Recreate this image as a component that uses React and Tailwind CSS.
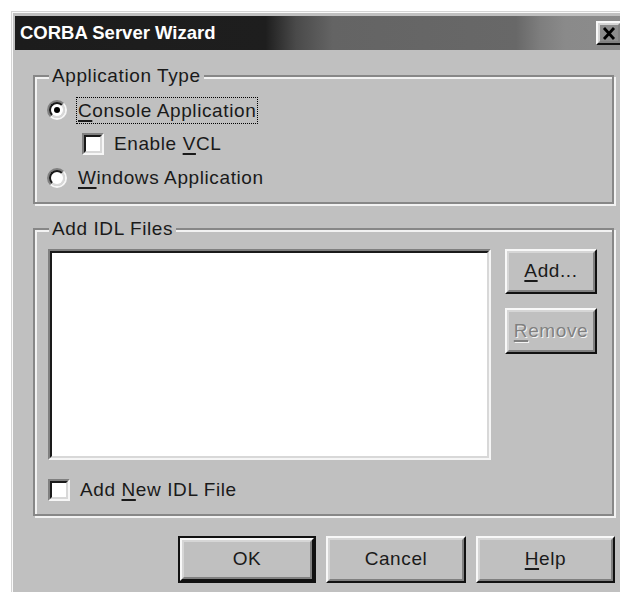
import React from "react";

const sans = "font-['Liberation_Sans',Arial,sans-serif]";

function Radio({ checked }) {
  return (
    <span className="flex h-[20px] w-[20px] shrink-0 rounded-full border-2 border-t-[#808080] border-l-[#808080] border-r-[#f6f6f6] border-b-[#f6f6f6]">
      <span className="flex flex-1 items-center justify-center rounded-full border-2 border-t-[#1a1a1a] border-l-[#1a1a1a] border-r-[#d8d8d8] border-b-[#d8d8d8] bg-white">
        {checked && <span className="h-[6px] w-[6px] rounded-full bg-black" />}
      </span>
    </span>
  );
}

function Check() {
  return (
    <span className="flex h-[22px] w-[22px] shrink-0 border-2 border-t-[#808080] border-l-[#808080] border-r-[#f6f6f6] border-b-[#f6f6f6]">
      <span className="flex-1 border-2 border-t-[#1a1a1a] border-l-[#1a1a1a] border-r-[#d8d8d8] border-b-[#d8d8d8] bg-white" />
    </span>
  );
}

function Face({ children }) {
  return (
    <span className="flex h-full w-full border-2 border-t-[#f8f8f8] border-l-[#f8f8f8] border-r-[#111] border-b-[#111]">
      <span className="flex h-full w-full items-center justify-center border-2 border-t-[#d6d6d6] border-l-[#d6d6d6] border-r-[#808080] border-b-[#808080]">
        {children}
      </span>
    </span>
  );
}

function Key({ children }) {
  return <span className="underline decoration-[1.5px] underline-offset-[3px]">{children}</span>;
}

function Group({ label, className, children }) {
  return (
    <div
      className={`relative border-2 border-[#878787] shadow-[2px_2px_0_#f2f2f2,inset_2px_2px_0_#f2f2f2] ${className}`}
    >
      <span className="absolute left-[14px] top-[-12px] bg-[#c0c0c0] px-[3px] leading-[22px]">{label}</span>
      {children}
    </div>
  );
}

export default function App() {
  return (
    <div className={`h-[592px] w-[620px] overflow-hidden bg-white pl-[11px] pt-[11px] text-[19px] tracking-[0.6px] text-[#1a1a1a] ${sans}`}>
      <div className="w-[640px] h-[600px] border-t border-l border-[#d4d4d4] bg-[#c0c0c0] pl-[3px] pt-[4px] shadow-[inset_1px_1px_0_#fafafa]">
        {/* caption bar */}
        <div className="flex h-[34px] w-[611px] items-center bg-[linear-gradient(90deg,#1c1c1c_0%,#1e1e1e_41%,#4a4a4a_46%,#646464_52%,#686868_82%,#7e7e7e_86%,#8a8a8a_90%,#8c8c8c_100%)] pl-[5px]">
          <span className="text-[18.5px] font-bold leading-none tracking-normal text-white">CORBA Server Wizard</span>
          <div className="ml-auto mr-[4px] h-[24px] w-[26px] self-center">
            <Face>
              <svg width="14" height="13" viewBox="0 0 14 13">
                <path d="M2 1 L12 12 M12 1 L2 12" stroke="#000" strokeWidth="2.8" fill="none" />
              </svg>
            </Face>
          </div>
        </div>

        <div className="ml-[18px] mt-[25px] w-[582px]">
          <Group label="Application Type" className="h-[129px] w-[581px] pl-[12px] pt-[16px]">
            <div className="flex h-[34px] items-center">
              <Radio checked />
              <span className="ml-[9px] border border-dotted border-black px-[1px] leading-[25px]">
                <Key>C</Key>onsole Application
              </span>
            </div>
            <div className="flex h-[34px] items-center pl-[35px]">
              <Check />
              <span className="ml-[10px]">
                Enable <Key>V</Key>CL
              </span>
            </div>
            <div className="flex h-[34px] items-center">
              <Radio />
              <span className="ml-[11px]">
                <Key>W</Key>indows Application
              </span>
            </div>
          </Group>

          <Group label="Add IDL Files" className="mt-[24px] h-[288px] w-[581px] pl-[13px] pt-[19px]">
            <div className="flex">
              <div className="h-[211px] w-[443px] border-2 border-t-[#808080] border-l-[#808080] border-r-[#f6f6f6] border-b-[#f6f6f6]">
                <div className="h-full w-full border-2 border-t-[#1a1a1a] border-l-[#1a1a1a] border-r-[#d8d8d8] border-b-[#d8d8d8] bg-white" />
              </div>
              <div className="ml-[14px] flex flex-col gap-[14px]">
                <div className="h-[45px] w-[92px]">
                  <Face>
                    <span>
                      <Key>A</Key>dd...
                    </span>
                  </Face>
                </div>
                <div className="h-[46px] w-[92px]">
                  <Face>
                    <span className="text-[#808080] [text-shadow:1px_1px_0_#f4f4f4]">
                      <Key>R</Key>emove
                    </span>
                  </Face>
                </div>
              </div>
            </div>
            <div className="mt-[16px] flex items-center">
              <Check />
              <span className="ml-[10px]">
                Add <Key>N</Key>ew IDL File
              </span>
            </div>
          </Group>

          <div className="mt-[20px] flex justify-end gap-[10px]">
            <div className="h-[47px] w-[138px] border-2 border-[#111]">
              <Face>OK</Face>
            </div>
            <div className="h-[47px] w-[140px]">
              <Face>Cancel</Face>
            </div>
            <div className="h-[47px] w-[139px]">
              <Face>
                <span>
                  <Key>H</Key>elp
                </span>
              </Face>
            </div>
          </div>
        </div>
      </div>
    </div>
  );
}
